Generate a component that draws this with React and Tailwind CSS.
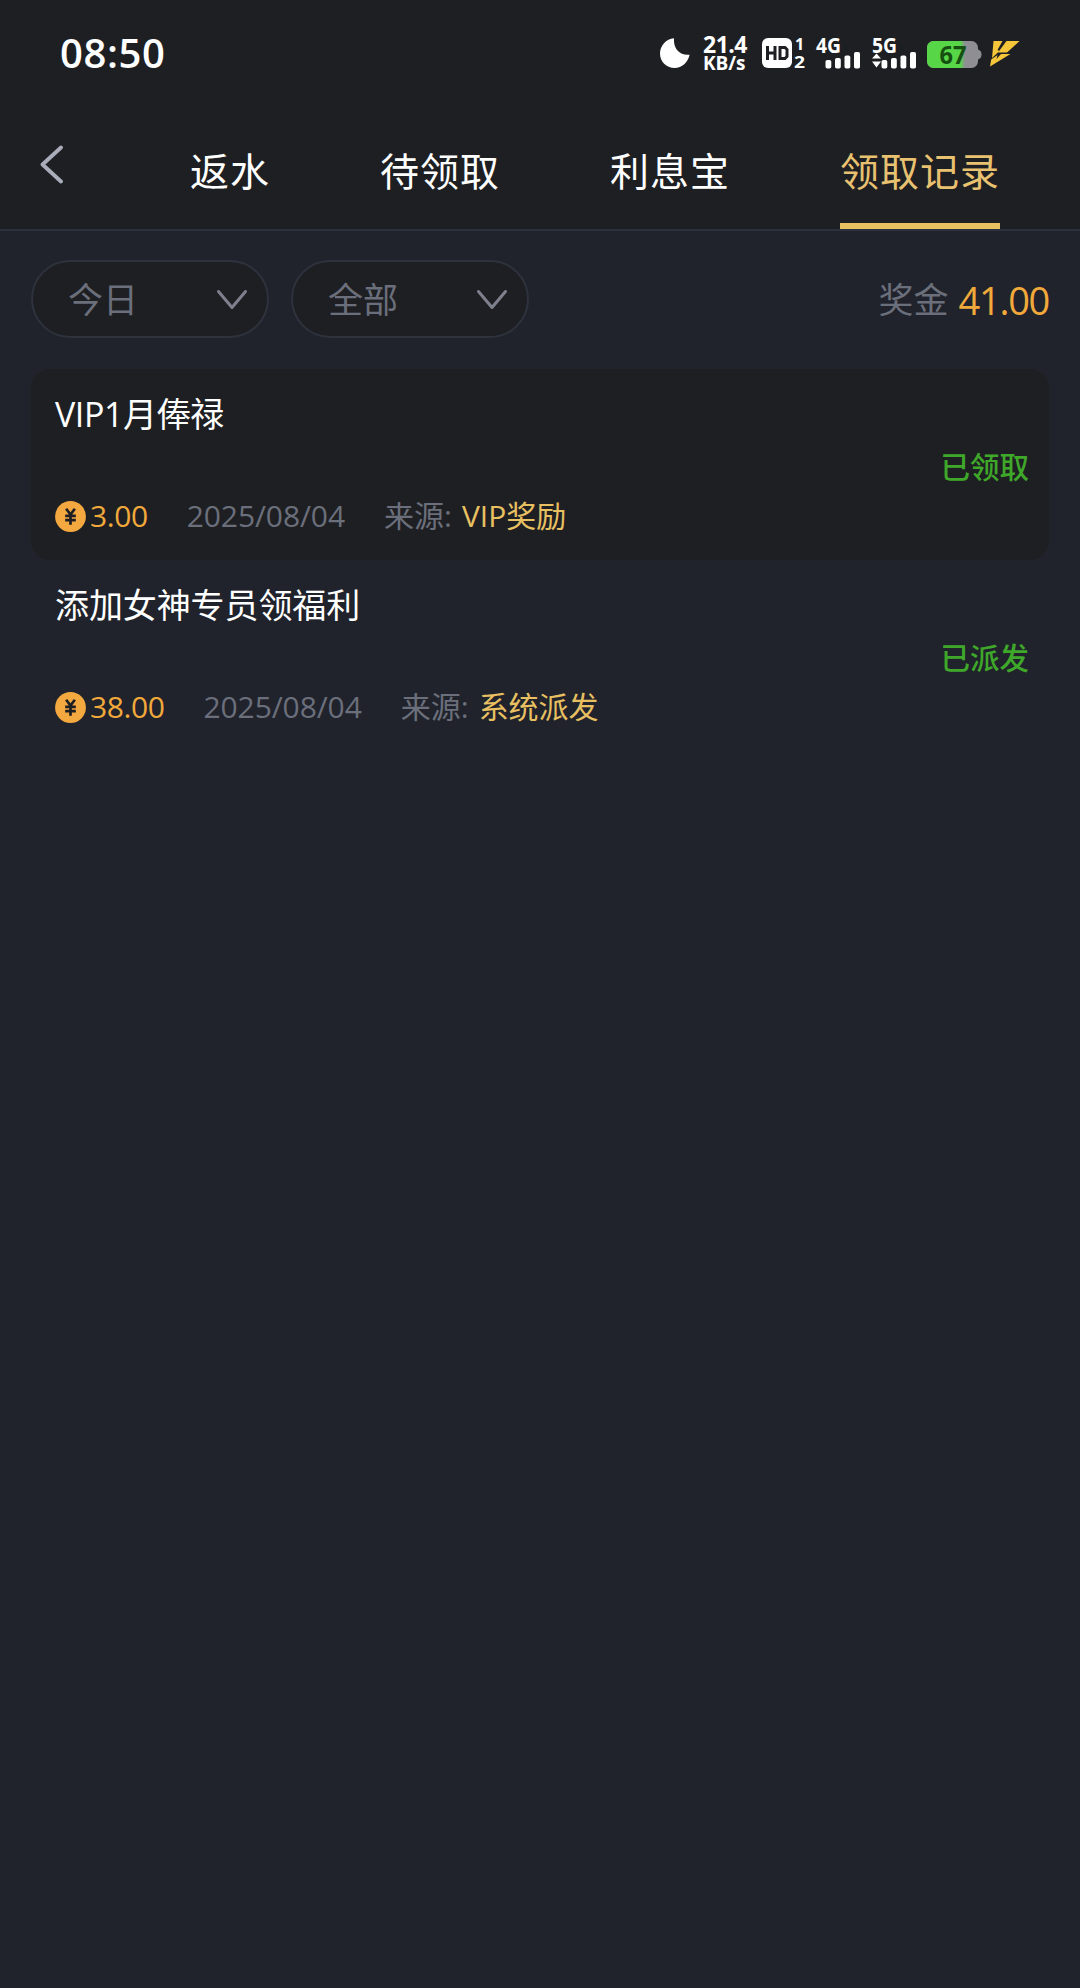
import React from "react";

const MoonIcon = () => (
  <svg className="h-[32px] w-[32px]" viewBox="0 0 32 32" fill="#fff">
    <path d="M15 1.2C14.3 10 19 18.600 30.600 17.800C29 25.500 23 31 15.600 31C7.300 31 1 24.600 1 16.500C1 8.500 7 2 15 1.200Z" />
  </svg>
);

const SignalBars = ({ arrows, label }) => (
  <svg className="h-[34px] w-[46px] overflow-visible" viewBox="0 0 46 34" fill="#fff">
    <text x="0" y="15.800" fontFamily="Open Sans, sans-serif" fontWeight="700" fontSize="21" textLength="25" lengthAdjust="spacingAndGlyphs">
      {label}
    </text>
    {arrows && <path d="M4.500 16.500L9 21.500H0ZM4.500 30.500L9 24.500H0Z" />}
    <rect x="9.500" y="23" width="5.800" height="8.500" rx="1.800" />
    <rect x="19" y="21" width="5.800" height="10.500" rx="1.800" />
    <rect x="28.500" y="18.500" width="5.800" height="13" rx="1.800" />
    <rect x="38" y="15" width="6" height="16.500" rx="1.800" />
  </svg>
);

const HdIcon = () => (
  <svg className="h-[34px] w-[44px] overflow-visible" viewBox="0 0 44 34">
    <rect x="0" y="1" width="30" height="30" rx="6" fill="#fff" />
    <path d="M5.500 9V23M13 9V23M5.500 16H13M18 10.500H23L25 12.500V19.500L23 21.500H18Z" fill="none" stroke="#1e1f23" strokeWidth="3" />
    <g fill="#fff" fontFamily="Open Sans, sans-serif" fontWeight="700">
      <text x="33" y="12.500" fontSize="16">1</text>
      <text x="32" y="30.500" fontSize="16" textLength="11" lengthAdjust="spacingAndGlyphs">2</text>
    </g>
  </svg>
);

const Battery = () => (
  <svg className="h-[28px] w-[56px] overflow-visible" viewBox="0 0 56 28">
    <defs>
      <clipPath id="battery-body"><rect x="0" y="0" width="51" height="27" rx="6.500" /></clipPath>
      <linearGradient id="battery-charge" x1="0" x2="1" y1="0" y2="0">
        <stop offset="0.88" stopColor="#57d648" />
        <stop offset="1" stopColor="#8e8e93" />
      </linearGradient>
    </defs>
    <g clipPath="url(#battery-body)">
      <rect width="51" height="27" fill="#8e8e93" />
      <rect width="38" height="27" fill="url(#battery-charge)" />
    </g>
    <path d="M51 8.500Q54.500 9.500 54.500 13.500Q54.500 17.500 51 18.500Z" fill="#8e8e93" />
    <text x="12.500" y="22.500" fontFamily="Open Sans, sans-serif" fontWeight="700" fontSize="25" fill="#165010" textLength="27" lengthAdjust="spacingAndGlyphs">67</text>
  </svg>
);

const Bolt = () => (
  <svg className="h-[26px] w-[32px]" viewBox="0 0 32 26" fill="#f5c53a">
    <path d="M4.500 0H13.500L8.500 9L10.500 10L3 17Z" />
    <path d="M17.500 0H30.500L18 11.500H9Z" />
    <path d="M12 13H21.500L1 25.500L2.200 18.500L8.500 14L7.500 18Z" />
  </svg>
);

const StatusBar = () => (
  <div className="flex h-[104px] items-start pl-[60px] pt-[36px] text-white">
    <span className="w-[599px] whitespace-nowrap text-[40px] font-semibold leading-[34px] tracking-[0.6px]">08:50</span>
    <div className="mt-px w-[44px]"><MoonIcon /></div>
    <div className="w-[59px] whitespace-nowrap text-[23px] font-bold leading-[17px]">
      <div className="tracking-[-0.5px]">21.4</div>
      <div className="mt-[2px] text-[19px] tracking-[-0.1px]">KB/s</div>
    </div>
    <div className="mt-px w-[54px]"><HdIcon /></div>
    <div className="mt-px w-[56px]"><SignalBars label="4G" /></div>
    <div className="mt-px w-[55px]"><SignalBars label="5G" arrows /></div>
    <div className="mt-[5px] w-[62px]"><Battery /></div>
    <div className="mt-[5px]"><Bolt /></div>
  </div>
);

const tabs = [
  { label: "返水", width: "w-[80px]" },
  { label: "待领取", width: "w-[120px]" },
  { label: "利息宝", width: "w-[120px]" },
  { label: "领取记录", width: "w-[160px]", active: true },
];

const Tabs = () => (
  <nav className="flex h-[127px] items-start border-b-2 border-[#2b323c] pl-[39px]">
    <svg className="mt-[40px] mr-[127px] h-[40px] w-[24px] shrink-0" viewBox="0 0 24 40" fill="none" stroke="#a9adb9" strokeWidth="3.800" strokeLinecap="round" strokeLinejoin="round">
      <path d="M22 3.500L3.500 20.500L22 37.500" />
    </svg>
    <div className="flex gap-[110px]">
      {tabs.map((t) => (
        <div
          key={t.label}
          className={
            "flex h-[125px] shrink-0 justify-center whitespace-nowrap pt-[47px] text-[39px] leading-[40px] tracking-[1px] " +
            t.width +
            (t.active ? " border-b-[6px] border-[#e8c062] text-[#e8c270]" : " text-white")
          }
        >
          {t.label}
        </div>
      ))}
    </div>
  </nav>
);

const Select = ({ label }) => (
  <button className="flex h-[78px] w-[238px] items-center justify-between rounded-full border-2 border-[#2d323d] bg-[#1e1f23] pl-[35px] pr-[19px]">
    <span className="mt-[2px] text-[35px] leading-[40px] text-[#6b6f7b]">{label}</span>
    <svg className="mt-[2px] h-[22px] w-[32px]" viewBox="0 0 32 22" fill="none" stroke="#7d818c" strokeWidth="3" strokeLinecap="round" strokeLinejoin="round">
      <path d="M2.500 2.500L16 18.500L29.500 2.500" />
    </svg>
  </button>
);

const Coin = () => (
  <svg className="mr-[4px] h-[31px] w-[31px]" viewBox="0 0 32 32">
    <circle cx="16" cy="16" r="15.900" fill="#f4a940" />
    <path d="M11.500 8L16 14L20.500 8M16 14V24.500M10.500 15.300H21.500M10.500 19.800H21.500" fill="none" stroke="#1e1f23" strokeWidth="2.800" />
  </svg>
);

const records = [
  { title: "VIP1月俸禄", titleTracking: "tracking-[-0.4px]", amount: "3.00", date: "2025/08/04", source: "VIP奖励", status: "已领取" },
  { title: "添加女神专员领福利", titleTracking: "tracking-[-0.1px]", amount: "38.00", date: "2025/08/04", source: "系统派发", status: "已派发" },
];

const Record = ({ r, dark }) => (
  <article
    className={
      "flex h-[191px] items-center justify-between rounded-[20px] pl-[24px] pr-[20px] " + (dark ? "bg-[#1e1f23]" : "")
    }
  >
    <div className="flex h-full flex-col whitespace-nowrap pt-[25px]">
      <h3 className={"text-[34px] leading-[40px] text-white " + r.titleTracking}>{r.title}</h3>
      <div className="mt-[62px] flex h-[40px] items-center text-[30px] leading-[40px]">
        <Coin />
        <span className="tracking-[-0.4px] text-[#f2a93b]">{r.amount}</span>
        <span className="ml-[39px] tracking-[-0.1px] text-[#6b6f7b]">{r.date}</span>
        <span className="ml-[39px] text-[#6b6f7b]">来源:</span>
        <span className="ml-[10px] text-[#e8c062]">{r.source}</span>
      </div>
    </div>
    <span className="mt-[5px] text-[29.5px] font-medium leading-[40px] text-[#3fa82a]">{r.status}</span>
  </article>
);

export default function App() {
  return (
    <div className="min-h-[1988px] w-[1080px] bg-[#20232b] font-['Open_Sans','Noto_Sans_CJK_SC',sans-serif]">
      <header className="bg-[#1e1f23]">
        <StatusBar />
        <Tabs />
      </header>
      <main className="px-[31px] pt-[29px]">
        <div className="mb-[31px] flex items-center">
          <div className="flex gap-[22px]">
            <Select label="今日" />
            <Select label="全部" />
          </div>
          <div className="ml-auto mt-[2px] flex items-center whitespace-nowrap text-[35px] leading-[40px]">
            <span className="text-[#6b6f7b]">奖金</span>
            <span className="ml-[10px] text-[38px] font-medium tracking-[-1.3px] text-[#f2a93b]">41.00</span>
          </div>
        </div>
        {records.map((r, i) => (
          <Record key={r.title} r={r} dark={i % 2 === 0} />
        ))}
      </main>
    </div>
  );
}
